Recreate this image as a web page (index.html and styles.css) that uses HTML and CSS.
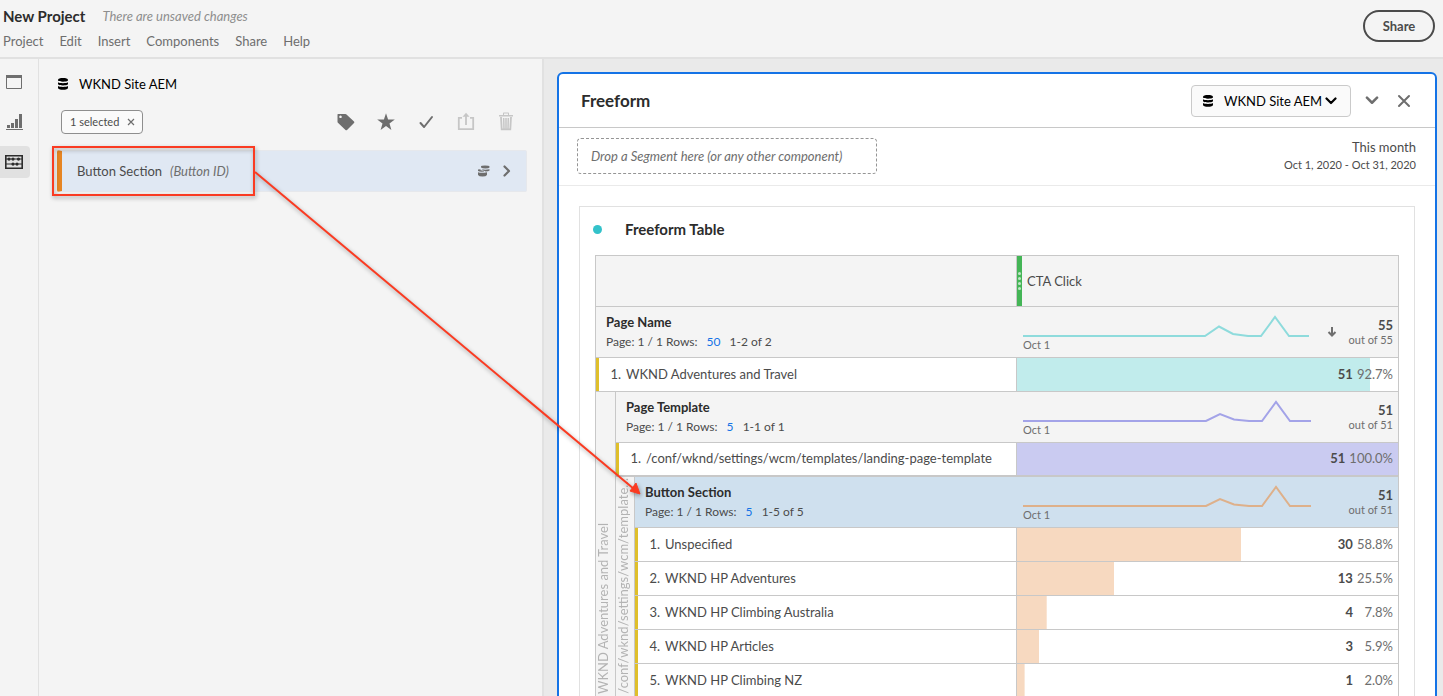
FILE: index.html
```html
<!DOCTYPE html>
<html lang="en">
<head>
<meta charset="utf-8">
<meta name="viewport" content="width=device-width, initial-scale=1">
<title>New Project</title>
<link rel="stylesheet" href="styles.css">
</head>
<body>
<svg class="defs" aria-hidden="true">
  <symbol id="db" viewBox="0 0 12 12">
    <path d="M1 2C1 .6 3.2 0 6 0s5 .6 5 2v.6C10.300 3.400 8.500 3.800 6 3.800S1.700 3.400 1 2.600zM1 4.300c1 .6 2.800.9 5 .9s4-.3 5-.9v1.900C10.300 7 8.500 7.400 6 7.400S1.700 7 1 6.200zM1 8c1 .6 2.800.9 5 .9S10 8.600 11 8v1.700C11 11.200 8.800 11.800 6 11.800S1 11.200 1 9.700z"/>
  </symbol>
  <symbol id="chevron" viewBox="0 0 12 8"><path d="M1.500 1.500 6 6l4.500-4.500" fill="none" stroke="currentColor" stroke-width="2.200" stroke-linecap="round" stroke-linejoin="round"/></symbol>
</svg>

<header class="topbar">
  <div class="heading">
    <h1 class="project">New Project</h1>
    <span class="unsaved">There are unsaved changes</span>
  </div>
  <nav class="menu">
    <button>Project</button><button>Edit</button><button>Insert</button><button>Components</button><button>Share</button><button>Help</button>
  </nav>
  <button class="share">Share</button>
</header>

<div class="shell">
  <aside class="rail">
    <button class="rail-item" aria-label="Panels"><svg width="18" height="16" viewBox="0 0 18 16"><path d="M1.500 1.500h15v13h-15z" fill="none" stroke="#6e6e6e"/><path d="M1 1h16v3H1z" fill="#6e6e6e"/></svg></button>
    <button class="rail-item" aria-label="Visualizations"><svg width="18" height="18" viewBox="0 0 18 18" fill="#6e6e6e"><path d="M2 12h3v3H2zM6 10h3v5H6zM10 6h3v9h-3zM14 1h3v14h-3zM1 16h17v1H1z"/></svg></button>
    <button class="rail-item rail-on" aria-label="Components"><svg width="20" height="16" viewBox="0 0 20 16" fill="#2c2c2c"><path d="M1.800 1.800h16.400v12.400H1.800z" fill="none" stroke="#2c2c2c" stroke-width="1.600"/><path d="M2 4.600h16v1H2zM2 9.600h16v1H2z"/><circle cx="5" cy="5.100" r="1.600"/><circle cx="9" cy="5.100" r="1.600"/><circle cx="14.500" cy="5.100" r="1.600"/><circle cx="9" cy="10.100" r="1.600"/><circle cx="13" cy="10.100" r="1.600"/></svg></button>
  </aside>

  <section class="components">
    <h2 class="suite"><svg class="db"><use href="#db"/></svg>WKND Site AEM</h2>
    <div class="actions">
      <button class="chip">1 selected<svg width="8" height="8" viewBox="0 0 8 8"><path d="M1 1l6 6M7 1 1 7" stroke="#6e6e6e" stroke-width="1.200"/></svg></button>
      <div class="tools">
        <button aria-label="Tag"><svg width="20" height="20" viewBox="0 0 20 20"><path fill="#6e6e6e" fill-rule="evenodd" d="M2 2h7.500q.6 0 1 .4l7.500 7.100q.8.800 0 1.500l-7 7q-.7.700-1.500 0L1.900 10.800q-.4-.4-.4-1V2.500q0-.5.5-.5zm2.500 1.500a1.300 1.300 0 1 0 .01 0z"/></svg></button>
        <button aria-label="Favorite"><svg width="20" height="20" viewBox="0 0 20 20"><path fill="#6e6e6e" d="M10 1.200l2.100 6.200 6.700.1-5.300 4 1.900 6.400L10 14.100l-5.400 3.800 1.900-6.400-5.300-4 6.700-.1z"/></svg></button>
        <button aria-label="Approve"><svg width="20" height="20" viewBox="0 0 20 20"><path fill="none" stroke="#6e6e6e" stroke-width="2" stroke-linecap="round" stroke-linejoin="round" d="M4.500 11l3.600 4L16 5"/></svg></button>
        <button aria-label="Share component" disabled><svg width="20" height="20" viewBox="0 0 20 20"><path fill="none" stroke="#c6c6c6" stroke-width="1.800" d="M6 5.800H2.800v11.400h14.400V5.800H14M10 13V4"/><path fill="#c6c6c6" d="M10 .8l3.500 4h-7z"/></svg></button>
        <button aria-label="Delete" disabled><svg width="20" height="20" viewBox="0 0 20 20"><path fill="#c6c6c6" d="M3 3h4V1.200q0-.7.700-.7h4.600q.7 0 .7.700V3h4v1.600H3zM8 1.500V3h4V1.500z" fill-rule="evenodd"/><path d="M5 5l.7 12.300h8.600L15 5" fill="none" stroke="#c6c6c6" stroke-width="1.800"/><path d="M7.700 6l.3 11M10 6v11M12.300 6l-.3 11" stroke="#c6c6c6" stroke-width="1.500"/></svg></button>
      </div>
    </div>
    <div class="component">
      <span>Button Section</span><em>(Button ID)</em>
      <svg class="stack" width="14" height="12" viewBox="0 0 14 12" fill="#6e6e6e"><path d="M4 1.500Q4 .5 8 .5t4.500 1v1Q12 3.400 8.500 3.400T4 2.500zM4.500 4.300q3.500.9 8 0v1.200q-1 1-4 1zM1 4.500l2.500-.3v1L7 5.700v.8Q3 7 1 6zM1 7.200q3.500 1.200 9 0V10q-1 1.500-4.500 1.500T1 10z"/></svg>
      <button aria-label="Show items"><svg width="8" height="12" viewBox="0 0 8 12"><path d="M1.500 1.500 6 6l-4.500 4.500" fill="none" stroke="#6e6e6e" stroke-width="2.200" stroke-linecap="round" stroke-linejoin="round"/></svg></button>
    </div>
  </section>

  <main class="workspace">
    <section class="panel">
      <header class="panel-head">
        <h2>Freeform</h2>
        <label class="picker"><svg class="db"><use href="#db"/></svg>
          <select aria-label="Report suite"><option>WKND Site AEM</option></select>
          <svg class="chevron"><use href="#chevron"/></svg></label>
        <button class="collapse" aria-label="Collapse"><svg width="14" height="9"><use href="#chevron"/></svg></button>
        <button aria-label="Close"><svg width="14" height="14" viewBox="0 0 14 14"><path d="M2 2l10 10M12 2 2 12" stroke="#6e6e6e" stroke-width="2" stroke-linecap="round"/></svg></button>
      </header>
      <div class="segments">
        <div class="drop">Drop a Segment here (or any other component)</div>
        <div class="dates"><span class="range">This month</span><span class="days">Oct 1, 2020 - Oct 31, 2020</span></div>
      </div>
      <article class="card">
        <h3>Freeform Table</h3>
        <table class="grid">
          <colgroup><col class="c-outer"><col class="c-inner"><col><col class="c-metric"></colgroup>
          <tr class="tall"><th colspan="3"></th><th class="metric"><span class="grip"><i></i><i></i><i></i><i></i></span>CTA Click</th></tr>
          <tr class="tall">
            <td colspan="3" class="dim"><b>Page Name</b><div class="paging">Page: 1 / 1 Rows: <button>50</button> 1-2 of 2</div></td>
            <td class="sum"><div class="trend"><div class="spark teal"><svg viewBox="0 0 288 24" preserveAspectRatio="none"><path d="M0 22H182L196 12.500 210 20 225 22H238L252 3 266 22H286"/></svg><span>Oct 1</span></div>
              <div class="stat"><svg class="sort" width="10" height="12" viewBox="0 0 10 12"><path d="M5 1v8M1.500 6 5 9.500 8.500 6" fill="none" stroke="#6e6e6e" stroke-width="2"/></svg><div><b>55</b><span>out of 55</span></div></div></div></td>
          </tr>
          <tr class="item"><td colspan="3" class="name"><span class="num">1.</span>WKND Adventures and Travel</td><td class="value teal" style="--share:92.7%"><b>51</b><span>92.7%</span></td></tr>
          <tr class="tall">
            <td class="gutter" rowspan="8"><div>WKND Adventures and Travel</div></td>
            <td colspan="2" class="dim"><b>Page Template</b><div class="paging">Page: 1 / 1 Rows: <button>5</button> 1-1 of 1</div></td>
            <td class="sum"><div class="trend"><div class="spark violet"><svg viewBox="0 0 288 24" preserveAspectRatio="none"><path d="M0 22H183L197 15 211 20.500 226 22H239L253 3 267 22H288"/></svg><span>Oct 1</span></div>
              <div class="stat"><div><b>51</b><span>out of 51</span></div></div></div></td>
          </tr>
          <tr class="item last"><td colspan="2" class="name"><span class="num">1.</span>/conf/wknd/settings/wcm/templates/landing-page-template</td><td class="value violet" style="--share:100%"><b>51</b><span>100.0%</span></td></tr>
          <tr class="tall selected">
            <td class="gutter" rowspan="6"><div>/conf/wknd/settings/wcm/template…</div></td>
            <td class="dim"><b>Button Section</b><div class="paging">Page: 1 / 1 Rows: <button>5</button> 1-5 of 5</div></td>
            <td class="sum"><div class="trend"><div class="spark orange"><svg viewBox="0 0 288 24" preserveAspectRatio="none"><path d="M0 22H183L197 15 211 20.500 226 22H239L253 3 267 22H288"/></svg><span>Oct 1</span></div>
              <div class="stat"><div><b>51</b><span>out of 51</span></div></div></div></td>
          </tr>
          <tr class="item"><td class="name"><span class="num">1.</span>Unspecified</td><td class="value orange" style="--share:58.8%"><b>30</b><span>58.8%</span></td></tr>
          <tr class="item"><td class="name"><span class="num">2.</span>WKND HP Adventures</td><td class="value orange" style="--share:25.5%"><b>13</b><span>25.5%</span></td></tr>
          <tr class="item"><td class="name"><span class="num">3.</span>WKND HP Climbing Australia</td><td class="value orange" style="--share:7.8%"><b>4</b><span>7.8%</span></td></tr>
          <tr class="item"><td class="name"><span class="num">4.</span>WKND HP Articles</td><td class="value orange" style="--share:5.9%"><b>3</b><span>5.9%</span></td></tr>
          <tr class="item"><td class="name"><span class="num">5.</span>WKND HP Climbing NZ</td><td class="value orange" style="--share:2%"><b>1</b><span>2.0%</span></td></tr>
        </table>
      </article>
    </section>
  </main>
</div>

<svg class="callout" aria-hidden="true">
  <g fill="none" stroke="#fa3b22" stroke-width="2"><rect x="53" y="147" width="201" height="48"/><path d="M255 172 634 489"/></g>
  <path d="M640 494l-10-3 6-8z" fill="#fa3b22" stroke="#fa3b22"/>
</svg>
</body>
</html>
```

FILE: styles.css
```css
* { box-sizing: border-box; }
body {
  margin: 0;
  height: 100vh;
  display: flex;
  flex-direction: column;
  overflow: hidden;
  position: relative;
  background: #f4f4f4;
  color: #4b4b4b;
  font: 13px/20px Lato, "Open Sans", sans-serif;
}
h1, h2, h3 { margin: 0; color: #2c2c2c; font-weight: 700; }
button, select { margin: 0; padding: 0; border: 0; background: none; color: inherit; font: inherit; }
button { display: flex; align-items: center; justify-content: center; }
svg { display: block; flex: none; }
.defs { position: absolute; width: 0; height: 0; }
.db { width: 12px; height: 12px; fill: #000; }

.topbar {
  display: grid;
  grid-template-columns: 1fr auto;
  align-content: start;
  row-gap: 5px;
  padding: 6px 8px 5px 3px;
  height: 59px;
  flex: none;
  border-bottom: 2px solid #e1e1e1;
}
.heading { display: flex; align-items: center; gap: 17px; }
.project { font-size: 15px; line-height: 20px; }
.unsaved { color: #8e8e8e; font-style: italic; }
.menu { display: flex; gap: 16px; color: #6e6e6e; grid-row: 2; }
.share {
  grid-column: 2;
  grid-row: 1 / 3;
  align-self: start;
  margin-top: 4px;
  width: 72px;
  height: 32px;
  border: 2px solid #4b4b4b;
  border-radius: 16px;
  font-weight: 700;
}

.shell { display: flex; flex: 1; min-height: 0; }
.rail { width: 39px; flex: none; padding-top: 7px; border-right: 1px solid #e1e1e1; display: flex; flex-direction: column; gap: 8px; }
.rail-item { width: 30px; height: 32px; padding-right: 2px; border-radius: 0 4px 4px 0; }
.rail-on { background: #e1e1e1; }

.components { flex: 0 0 505px; border-right: 2px solid #e1e1e1; padding: 15px 15px 0 18px; }
.suite { display: flex; align-items: center; gap: 10px; color: #000; font-size: 13px; line-height: 20px; font-weight: 400; }
.actions { display: flex; justify-content: space-between; align-items: center; margin-top: 16px; padding: 0 11px 0 4px; }
.chip { height: 24px; padding: 0 7px 0 8px; gap: 8px; border: 1px solid #8e8e8e; border-radius: 4px; background: #fafafa; font-size: 11px; }
.tools { display: flex; gap: 20px; }
.component {
  display: flex;
  align-items: center;
  height: 42px;
  margin-top: 16px;
  padding: 0 15px;
  gap: 8px;
  border: 1px solid #e6e8ec;
  border-left: 5px solid #e68523;
  border-radius: 2px;
  background: #e0e8f3;
}
.component em { color: #6e6e6e; }
.stack { margin-left: auto; }
.component button { margin-left: 4px; }

.workspace { flex: 1; min-width: 0; padding: 13px 6px 0 13px; background: #eaeaea; overflow: hidden; }
.panel { border: 2px solid #1473e6; border-radius: 6px; background: #fff; padding-bottom: 20px; }
.panel-head { display: flex; align-items: center; height: 54px; padding: 0 24px 0 22px; gap: 14px; border-bottom: 1px solid #c8c8c8; }
.panel-head h2 { flex: 1; font-size: 17px; line-height: 24px; }
.picker { display: flex; align-items: center; width: 160px; height: 32px; padding: 0 13px 0 10px; border: 1px solid #cacaca; border-radius: 4px; background: #fafafa; color: #000; }
.picker select { flex: 1; min-width: 0; margin-left: 10px; appearance: none; }
.chevron { width: 12px; height: 8px; }
.collapse { color: #6e6e6e; }
.panel-head .collapse { margin-right: 4px; }

.segments { display: flex; justify-content: space-between; align-items: center; height: 58px; padding: 0 19px 2px 18px; border-bottom: 1px solid #eaeaea; }
.drop { width: 300px; padding: 7px 13px; border: 1px dashed #959595; border-radius: 4px; color: #6e6e6e; font-style: italic; }
.dates { display: flex; flex-direction: column; text-align: right; line-height: 18px; }
.days { font-size: 11px; }

.card { margin: 20px 20px 0; padding: 11px 15px 16px 15px; border: 1px solid #e1e1e1; }
.card h3 { display: flex; align-items: center; gap: 23px; font-size: 15px; line-height: 22px; margin-bottom: 15px; }
.card h3::before { content: ""; width: 9px; height: 9px; border-radius: 50%; background: #33c2ca; margin-left: -2px; }

.grid { width: 100%; table-layout: fixed; border-spacing: 0; border: 1px solid #c8c8c8; border-width: 1px 0 0 1px; }
.c-outer { width: 20px; }
.c-inner { width: 19px; }
.c-metric { width: 382px; }
.grid th, .grid td { padding: 0; border: 1px solid #c8c8c8; border-width: 0 1px 1px 0; text-align: left; font-weight: 400; }
.tall { height: 51px; background: #f4f4f4; }
.item { height: 34px; background: #fff; }
.selected { background: #cfe0ee; }
.grid .last td { border-bottom-width: 2px; }
.metric { line-height: 50px; }
.grip { float: left; display: flex; flex-direction: column; align-items: center; justify-content: center; gap: 2px; width: 5px; height: 50px; margin-right: 5px; background: #44b556; }
.grip i { width: 3px; height: 3px; border-radius: 50%; background: #c0e6c6; }
.grid .dim { padding-left: 10px; border-right: 0; }
.dim b { display: block; color: #2c2c2c; }
.paging { display: flex; gap: 6px; font-size: 12px; white-space: pre; }
.paging button { color: #1473e6; }
.grid .name { padding: 0 0 2px 3px; background: linear-gradient(#dfbf2b, #dfbf2b) left / 3px 100% no-repeat; white-space: nowrap; }
.num { display: inline-block; width: 22px; margin-right: 5px; text-align: right; }

.trend { display: flex; padding: 0 5px 0 6px; }
.spark { flex: 1; min-width: 0; color: #6e6e6e; font-size: 11px; line-height: 14px; padding-top: 2px; }
.spark svg { width: 100%; height: 24px; }
.spark path { fill: none; stroke: var(--line); stroke-width: 2; vector-effect: non-scaling-stroke; }
.stat { display: flex; align-items: center; justify-content: flex-end; width: 82px; gap: 12px; text-align: right; }
.stat b { display: block; line-height: 16px; }
.stat span { display: block; font-size: 11px; line-height: 14px; color: #6e6e6e; }
.teal { --line: #8edbdc; --bar: #c1ecec; }
.violet { --line: #a3a3e8; --bar: #cacbf1; }
.orange { --line: #deb08a; --bar: #f7d9c0; }
.grid .value { padding: 0 5px 2px 0; text-align: right; background: linear-gradient(var(--bar), var(--bar)) left / var(--share) 100% no-repeat; }
.value span { display: inline-block; min-width: 36px; margin-left: 4px; color: #6e6e6e; }

.grid .gutter { vertical-align: bottom; background: #f4f4f4; padding-bottom: 3px; }
.gutter div { width: 15px; writing-mode: vertical-rl; transform: rotate(180deg); line-height: 15px; color: #b3b3b3; white-space: nowrap; }

.callout { position: absolute; left: 0; top: 0; width: 660px; height: 520px; pointer-events: none; filter: drop-shadow(1px 2px 2px rgba(0, 0, 0, .35)); }
```
